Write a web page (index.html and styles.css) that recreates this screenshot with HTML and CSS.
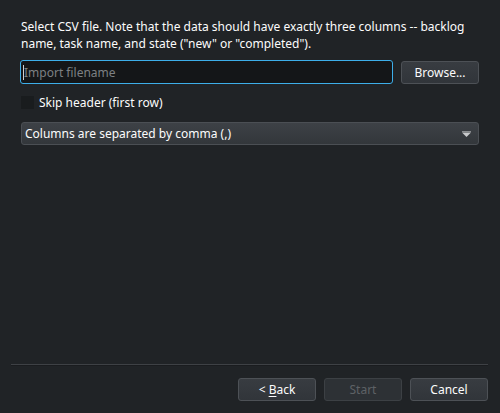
FILE: index.html
```html
<!DOCTYPE html>
<html>
<head>
<meta charset="utf-8">
<link rel="stylesheet" href="styles.css">
</head>
<body>
<div class="dialog">
  <div class="content">
    <p class="intro">Select CSV file. Note that the data should have exactly three columns -- backlog name, task name, and state ("new" or "completed").</p>
    <div class="file-row">
      <div class="input"><span class="caret"></span><span class="placeholder">Import filename</span></div>
      <button class="btn browse">Browse...</button>
    </div>
    <label class="check-row"><span class="checkbox"></span><span>Skip header (first row)</span></label>
    <div class="combo">
      <span>Columns are separated by comma (,)</span>
      <svg class="arrow" width="9" height="6" viewBox="0 0 9 6"><path d="M0 1.5 H9 L4.5 6 Z" fill="#c8cacc"/><path d="M0 0 H9 V1.2 H0Z" fill="#8a8d90"/></svg>
    </div>
  </div>
  <div class="footer">
    <div class="separator"></div>
    <div class="buttons">
      <button class="btn">&lt; <u>B</u>ack</button>
      <button class="btn disabled">Start</button>
      <button class="btn">Cancel</button>
    </div>
  </div>
</div>
</body>
</html>
```

FILE: styles.css
```css
html, body {
  margin: 0;
  padding: 0;
  background: #202326;
  height: 100%;
}
.dialog {
  width: 500px;
  height: 413px;
  display: flex;
  flex-direction: column;
  justify-content: space-between;
  font-family: "Noto Sans", sans-serif;
  font-size: 12px;
  color: #fcfcfc;
}
.content {
  padding: 18px 21px 0 20px;
  display: flex;
  flex-direction: column;
}
.intro {
  margin: 0 0 0 1px;
  line-height: 17px;
}
.file-row {
  display: flex;
  align-items: center;
  gap: 8px;
  margin-top: 8px;
}
.input {
  flex: 1;
  height: 22px;
  border: 1px solid #3daee9;
  border-radius: 3px;
  background: #141618;
  display: flex;
  align-items: center;
  padding-left: 2px;
}
.caret {
  width: 1px;
  height: 15px;
  background: #d0d0d0;
}
.placeholder {
  color: #7d8083;
}
.btn {
  font-family: "Noto Sans", sans-serif;
  font-size: 12px;
  color: #fcfcfc;
  background: linear-gradient(#383c41, #31353a);
  border: 1px solid #4d5156;
  border-radius: 3px;
  width: 78px;
  height: 23px;
  padding: 0;
}
.btn u {
  text-underline-offset: 2px;
}
.btn.disabled {
  color: #5e6165;
  background: #2d3135;
  border-color: #3c4044;
}
.check-row {
  display: flex;
  align-items: center;
  gap: 5px;
  margin-top: 10px;
  margin-left: 1px;
}
.checkbox {
  width: 13px;
  height: 13px;
  background: #191c1e;
}
.combo {
  margin-top: 11px;
  margin-left: 1px;
  height: 21px;
  border: 1px solid #4b4f54;
  border-radius: 3px;
  background: linear-gradient(#3d4146, #33373b);
  display: flex;
  align-items: center;
  justify-content: space-between;
  padding: 0 7px 0 3px;
}
.arrow {
  display: block;
}
.footer {
  padding: 0 12px 12px 11px;
}
.separator {
  height: 1px;
  background: #3e4145;
  border-bottom: 1px solid #1a1c1f;
}
.buttons {
  display: flex;
  justify-content: flex-end;
  gap: 8px;
  margin-top: 12px;
}
```
